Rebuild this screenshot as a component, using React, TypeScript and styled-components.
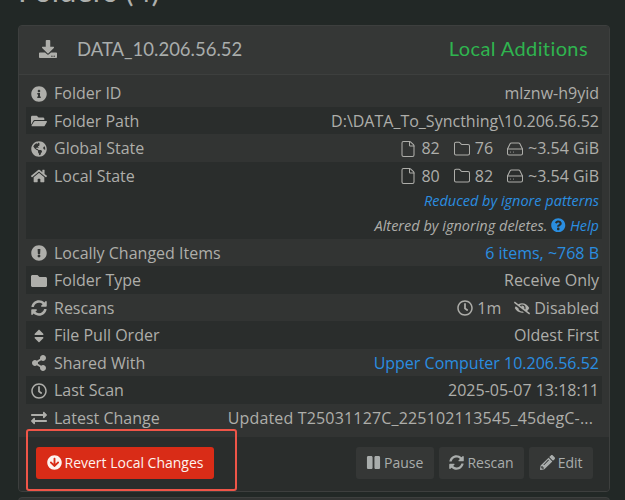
import styled, { createGlobalStyle } from "styled-components";
import type { ReactNode } from "react";
import {
    FaArrowCircleDown,
    FaDownload,
    FaEyeSlash,
    FaExchangeAlt,
    FaExclamationCircle,
    FaFolder,
    FaFolderOpen,
    FaGlobeAmericas,
    FaHome,
    FaInfoCircle,
    FaPause,
    FaPencilAlt,
    FaQuestionCircle,
    FaRegClock,
    FaShareAlt,
    FaSort,
    FaSyncAlt,
} from "react-icons/fa";
import { File, Folder, HardDrive } from "lucide-react";

const GlobalStyle = createGlobalStyle`
    html, body {
        margin: 0;
        background: #222826;
    }
    * {
        box-sizing: border-box;
    }
`;

const Page = styled.div`
    width: 625px;
    height: 500px;
    overflow: hidden;
    position: relative;
    padding: 0 15px 0 18px;
    background: #222826;
    font-family: "Open Sans", sans-serif;
    color: #aeaeaa;
`;

const PageTitle = styled.h3`
    margin: -24px 0 0;
    height: 49px;
    font-family: Lato, sans-serif;
    font-size: 31px;
    font-weight: 400;
    line-height: 28px;
    color: #aeb0ad;
`;

const Panel = styled.section`
    display: flex;
    flex-direction: column;
    background: #323433;
    border: 1px solid #3d3f3e;
    border-radius: 4px;
    height: 467px;
    margin-bottom: 5px;
    overflow: hidden;
`;

const PanelHeading = styled.header`
    display: flex;
    align-items: center;
    height: 49px;
    padding: 0 21px 3px 20px;
    background: #353736;
    border-bottom: 1px solid #3d3f3e;
    font-family: Lato, sans-serif;
    font-size: 18.5px;
`;

const HeadingIcon = styled.span`
    display: flex;
    width: 38px;
    font-size: 18px;
`;

const FolderName = styled.span`
    flex: 1;
    color: #a9adac;
`;

const FolderStatus = styled.span`
    margin-bottom: 2px;
    font-size: 20px;
    letter-spacing: 0.4px;
    color: #2fb44f;
`;

const PanelBody = styled.div`
    padding: 4px 7px 0;
`;

const Row = styled.div<{ $striped?: boolean; $height?: number }>`
    display: flex;
    justify-content: space-between;
    padding: 4px 3px 0 4px;
    height: ${(p) => p.$height ?? 27.5}px;
    background: ${(p) => (p.$striped ? "#2a2d2c" : "transparent")};
    font-size: 16px;
    line-height: 21px;
    white-space: nowrap;
`;

const Label = styled.span`
    display: flex;
    align-items: center;
    height: 21px;
`;

const RowIcon = styled.span`
    display: flex;
    justify-content: center;
    width: 17px;
    margin-right: 7px;
    font-size: 16px;
`;

const Value = styled.span<{ $link?: boolean; $inset?: boolean }>`
    display: flex;
    align-items: center;
    height: 21px;
    gap: 5px;
    padding-right: ${(p) => (p.$inset ? "6px" : "0")};
    letter-spacing: ${(p) => (p.$inset ? "0.17px" : "normal")};
    color: ${(p) => (p.$link ? "#2a8ee0" : "#aeaeaa")};
`;

const ValueStack = styled.div`
    display: flex;
    flex-direction: column;
    align-items: flex-end;
`;

const Notes = styled.div`
    display: flex;
    flex-direction: column;
    align-items: flex-end;
    margin-top: 1px;
`;

const Note = styled.span<{ $link?: boolean }>`
    display: flex;
    align-items: center;
    gap: 4px;
    height: 25px;
    font-size: 14.5px;
    font-style: italic;
    color: ${(p) => (p.$link ? "#2a8ee0" : "#aeaeaa")};
`;

const Stat = styled.span`
    display: flex;
    align-items: center;
    gap: 4px;
    margin-left: 8px;
`;

const PanelFooter = styled.footer`
    flex: 1;
    display: flex;
    justify-content: space-between;
    padding: 10px 16px 0 17px;
    background: #2a2d2c;
`;

const ButtonGroup = styled.div`
    display: flex;
    gap: 5px;
`;

const Button = styled.button<{ $danger?: boolean }>`
    display: flex;
    align-items: center;
    gap: 3px;
    height: 32px;
    padding: 0 10.5px;
    border: none;
    border-radius: 3px;
    background: ${(p) => (p.$danger ? "#d92c17" : "#353736")};
    color: ${(p) => (p.$danger ? "#fdf3ef" : "#a9adac")};
    font-family: "Open Sans", sans-serif;
    font-size: 14px;

    svg {
        font-size: 15px;
    }
`;

const Callout = styled.div`
    position: absolute;
    left: 26px;
    top: 429px;
    width: 211px;
    height: 62px;
    border: 2px solid #ef5548;
    border-radius: 3px;
`;

const NextPanel = styled.div`
    height: 20px;
    background: #323433;
    border: 1px solid #3d3f3e;
    border-radius: 4px;
`;

type InfoRow = {
    icon: ReactNode;
    label: string;
    value: ReactNode;
    height?: number;
};

const stat = (icon: ReactNode, text: string) => (
    <Stat>
        {icon}
        {text}
    </Stat>
);

const counts = (files: string, dirs: string) => (
    <Value>
        {stat(<File size={18} strokeWidth={1.4} />, files)}
        {stat(<Folder size={18} strokeWidth={1.4} />, dirs)}
        {stat(<HardDrive size={18} strokeWidth={1.4} />, "~3.54 GiB")}
    </Value>
);

const rows: InfoRow[] = [
    { icon: <FaInfoCircle />, label: "Folder ID", value: <Value>mlznw-h9yid</Value> },
    { icon: <FaFolderOpen />, label: "Folder Path", value: <Value>D:\DATA_To_Syncthing\10.206.56.52</Value> },
    { icon: <FaGlobeAmericas />, label: "Global State", value: counts("82", "76") },
    {
        icon: <FaHome />,
        label: "Local State",
        height: 77,
        value: (
            <ValueStack>
                {counts("80", "82")}
                <Notes>
                    <Note $link>Reduced by ignore patterns</Note>
                    <Note>
                        Altered by ignoring deletes.
                        <Note $link>
                            <FaQuestionCircle /> Help
                        </Note>
                    </Note>
                </Notes>
            </ValueStack>
        ),
    },
    { icon: <FaExclamationCircle />, label: "Locally Changed Items", value: <Value $link>6 items, ~768 B</Value> },
    { icon: <FaFolder />, label: "Folder Type", value: <Value>Receive Only</Value> },
    {
        icon: <FaSyncAlt />,
        label: "Rescans",
        value: (
            <Value>
                {stat(<FaRegClock />, "1m")}
                {stat(<FaEyeSlash />, "Disabled")}
            </Value>
        ),
    },
    { icon: <FaSort />, label: "File Pull Order", value: <Value>Oldest First</Value> },
    { icon: <FaShareAlt />, label: "Shared With", value: <Value $link>Upper Computer 10.206.56.52</Value> },
    { icon: <FaRegClock />, label: "Last Scan", value: <Value>2025-05-07 13:18:11</Value> },
    {
        icon: <FaExchangeAlt />,
        label: "Latest Change",
        height: 33,
        value: <Value $inset>Updated T25031127C_225102113545_45degC-...</Value>,
    },
];

export default function App() {
    return (
        <Page>
            <GlobalStyle />
            <PageTitle>Folders (4)</PageTitle>
            <Panel>
                <PanelHeading>
                    <HeadingIcon>
                        <FaDownload />
                    </HeadingIcon>
                    <FolderName>DATA_10.206.56.52</FolderName>
                    <FolderStatus>Local Additions</FolderStatus>
                </PanelHeading>
                <PanelBody>
                    {rows.map((row, i) => (
                        <Row key={row.label} $striped={i % 2 === 1} $height={row.height}>
                            <Label>
                                <RowIcon>{row.icon}</RowIcon>
                                {row.label}
                            </Label>
                            {row.value}
                        </Row>
                    ))}
                </PanelBody>
                <PanelFooter>
                    <Button $danger>
                        <FaArrowCircleDown /> Revert Local Changes
                    </Button>
                    <ButtonGroup>
                        <Button>
                            <FaPause /> Pause
                        </Button>
                        <Button>
                            <FaSyncAlt /> Rescan
                        </Button>
                        <Button>
                            <FaPencilAlt /> Edit
                        </Button>
                    </ButtonGroup>
                </PanelFooter>
            </Panel>
            <NextPanel />
            <Callout />
        </Page>
    );
}
